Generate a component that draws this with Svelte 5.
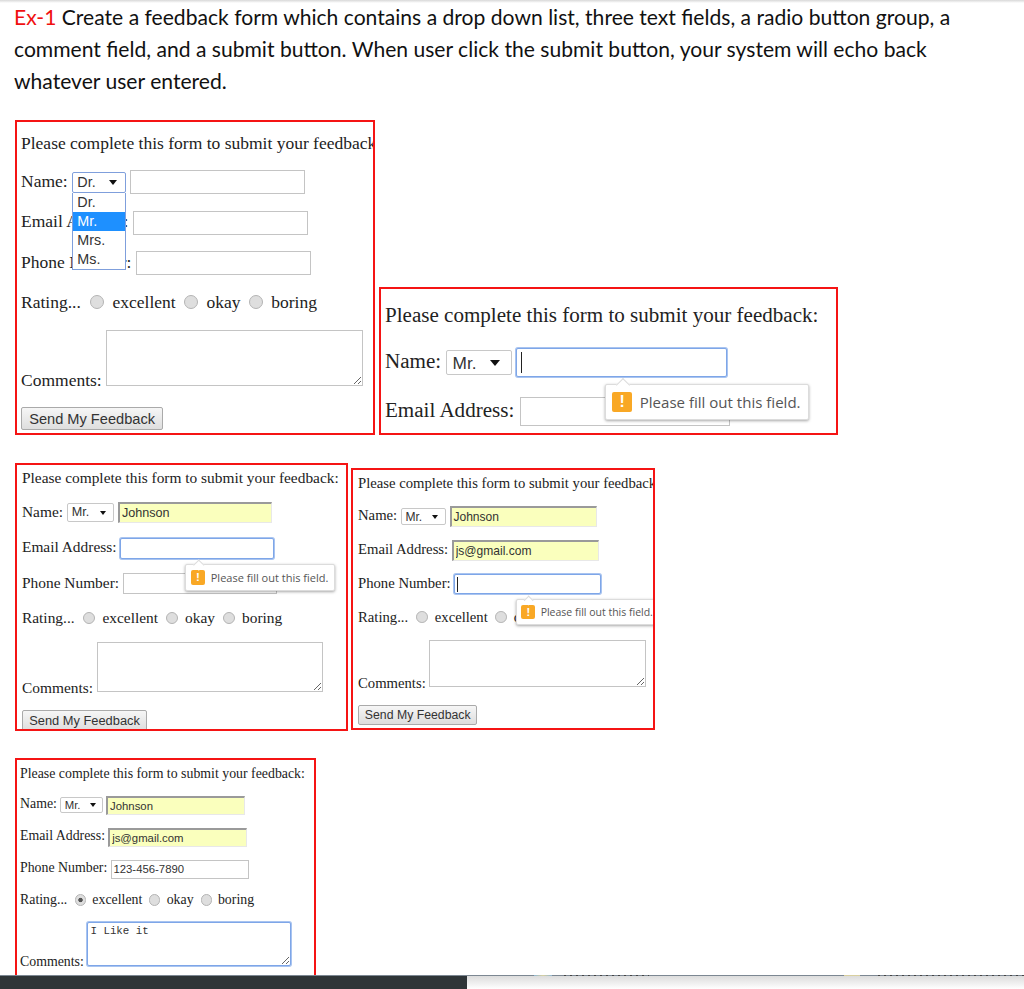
<script>
  const titles = ['Dr.', 'Mr.', 'Mrs.', 'Ms.'];

  const A = { title: 'Dr.', open: true };
  const B = { title: 'Mr.', focus: 'name', tip: 'name', only: 2 };
  const C = { title: 'Mr.', name: 'Johnson', focus: 'email', tip: 'email', filled: ['name'] };
  const D = { title: 'Mr.', name: 'Johnson', email: 'js@gmail.com', focus: 'phone', tip: 'phone', filled: ['name', 'email'] };
  const E = { title: 'Mr.', name: 'Johnson', email: 'js@gmail.com', phone: '123-456-7890', rating: 'excellent', comment: 'I Like it', filled: ['name', 'email'] };

  const fields = [
    { id: 'name', label: 'Name:' },
    { id: 'email', label: 'Email Address:' },
    { id: 'phone', label: 'Phone Number:' }
  ];
  const ratings = ['excellent', 'okay', 'boring'];
</script>

{#snippet feedback(f)}
  <p class="intro">Please complete this form to submit your feedback:</p>

  {#each fields.slice(0, f.only ?? 3) as field}
    <div class="field">
      <label for={field.id}>{field.label}</label>
      {#if field.id === 'name'}
        <span class="pick" class:open={f.open}>
          <select>
            {#each titles as t}
              <option selected={t === f.title}>{t}</option>
            {/each}
          </select>
          {#if f.open}
            <ul class="options">
              {#each titles as t}
                <li class:hl={t === 'Mr.'}>{t}</li>
              {/each}
            </ul>
          {/if}
        </span>
      {/if}
      <span class="wrap">
        <input
          type="text"
          value={f[field.id] ?? ''}
          class:filled={f.filled?.includes(field.id)}
          class:focus={f.focus === field.id}
        />
        {#if f.tip === field.id}
          {#if field.id !== 'email'}<i class="caret"></i>{/if}
          <div class="tip">
            <b class="warn">!</b>
            <span>Please fill out this field.</span>
          </div>
        {/if}
      </span>
    </div>
  {/each}

  {#if !f.only}
    <div class="field rating">
      <span class="lead">Rating...</span>
      {#each ratings as r}
        <input type="radio" checked={f.rating === r} />
        <span class="opt">{r}</span>
      {/each}
    </div>
    <div class="field comments">
      <label for="comments">Comments:</label>
      <textarea class:focus={f.comment} value={f.comment ?? ''}></textarea>
    </div>
    <button type="button">Send My Feedback</button>
  {/if}
{/snippet}

<div class="page">
  <p class="task">
    <span class="ex">Ex-1</span> Create a feedback form which contains a drop down list, three text fields, a radio button group, a comment field, and a submit button. When user click the submit button, your system will echo back whatever user entered.
  </p>

  <div class="row first">
    <section class="panel a">{@render feedback(A)}</section>
    <section class="panel b">{@render feedback(B)}</section>
  </div>

  <div class="row second">
    <section class="panel c">{@render feedback(C)}</section>
    <section class="panel d">{@render feedback(D)}</section>
  </div>

  <div class="row third">
    <section class="panel e">{@render feedback(E)}</section>
  </div>

  <footer>
    <div class="dark"></div>
    <div class="light">
      <i class="mark tint one"></i>
      <i class="mark dash two"></i>
      <i class="mark tan three"></i>
      <i class="mark dash four"></i>
    </div>
  </footer>
</div>

<style>
  :global(body) {
    margin: 0;
    background: #fff;
  }

  .page {
    position: relative;
    width: 1024px;
    height: 989px;
    overflow: hidden;
    background: linear-gradient(#d8d8d8, #fff 3px);
  }

  .task {
    margin: 0;
    padding: 1px 50px 0 14px;
    height: 120px;
    box-sizing: border-box;
    font-family: Lato, "Open Sans", sans-serif;
    font-size: 21.1px;
    line-height: 32px;
    color: #111;
  }

  .ex {
    color: #f01010;
  }

  .row {
    display: flex;
    align-items: flex-start;
    margin-left: 15px;
  }

  .first {
    gap: 4px;
    align-items: flex-end;
    height: 315px;
  }

  .second {
    gap: 3px;
    margin-top: 28px;
    height: 295px;
  }

  .panel {
    position: relative;
    box-sizing: border-box;
    flex: none;
    border: 2px solid #f51414;
    overflow: hidden;
    font-family: "Liberation Serif", serif;
    color: #222;
  }

  .a { width: 360px; height: 315px; font-size: 17.5px; padding-left: 4px; }
  .b { width: 459px; height: 148px; font-size: 21.07px; padding-left: 4px; }
  .c { width: 333px; height: 268px; font-size: 15.4px; padding-left: 5px; }
  .d { width: 304px; height: 262px; font-size: 14.7px; padding-left: 5px; margin-top: 5px; }
  .e { width: 301px; height: 217px; font-size: 13.85px; padding-left: 3px; border-bottom: 0; }

  .intro {
    margin: 0;
    white-space: nowrap;
    line-height: 1.2em;
  }

  .a .intro { margin-top: 11px; }
  .b .intro { margin-top: 14px; }
  .c .intro { margin-top: 4px; }
  .d .intro { margin-top: 5px; }
  .e .intro { margin-top: 6px; }

  .field {
    display: flex;
    align-items: center;
    height: 1.37em;
    margin-top: 0.94em;
    white-space: nowrap;
  }

  label {
    margin-right: 0.25em;
  }

  .lead {
    margin-right: 0.2em;
  }

  .field > label {
    margin-bottom: 0.1em;
  }

  .pick {
    position: relative;
    display: inline-block;
    margin-right: 0.23em;
  }

  .pick::after {
    content: "";
    position: absolute;
    right: 0.55em;
    top: 0.48em;
    border: 0.24em solid transparent;
    border-top: 0.32em solid #111;
    border-bottom: 0;
  }

  select {
    display: block;
    appearance: none;
    box-sizing: border-box;
    width: 3.77em;
    height: 1.46em;
    padding: 0 0 0 0.3em;
    border: 1px solid #c8c8c8;
    border-radius: 2px;
    background: #fff;
    font-family: "Liberation Sans", sans-serif;
    font-size: 0.82em;
    color: #333;
  }

  .open select {
    border-color: #7f9fdc;
  }

  .options {
    position: absolute;
    z-index: 3;
    left: 0;
    top: 100%;
    box-sizing: border-box;
    width: 100%;
    margin: 0;
    padding: 0;
    list-style: none;
    background: #fff;
    border: 1px solid #7f9fdc;
    border-top: 0;
    font-family: "Liberation Sans", sans-serif;
    font-size: 0.82em;
    line-height: 1.32em;
    color: #333;
  }

  .options li {
    padding-left: 0.3em;
  }

  .options .hl {
    background: #1e90ff;
    color: #fff;
  }

  .wrap {
    position: relative;
    display: inline-block;
  }

  input[type="text"] {
    display: block;
    box-sizing: border-box;
    width: 12.2em;
    height: 1.67em;
    padding: 0 0.15em;
    border: 1px solid #c4c4c4;
    background: #fff;
    font-family: "Liberation Sans", sans-serif;
    font-size: 0.82em;
    outline: none;
    color: #333;
  }

  input.filled {
    background: #faffbd;
    border-color: #9a9a9a #e8e8e8 #e8e8e8 #9a9a9a;
    border-width: 2px 1px 1px 2px;
  }

  input.focus,
  textarea.focus {
    border: 1px solid #7ea6e8;
    border-radius: 2px;
    box-shadow: 0 0 0 1px #a9c4f0;
  }

  .caret {
    position: absolute;
    left: 0.2em;
    top: 0.2em;
    bottom: 0.2em;
    width: 1px;
    background: #222;
  }

  .tip {
    position: absolute;
    z-index: 2;
    left: 5.87em;
    top: calc(100% + 0.47em);
    display: flex;
    align-items: center;
    gap: 0.5em;
    padding: 0.45em 0.47em 0.45em 0.42em;
    background: #fff;
    border: 1px solid #dcdcdc;
    border-radius: 2px;
    box-shadow: 0 1px 3px rgba(0, 0, 0, 0.35);
    font-family: "Open Sans", sans-serif;
    font-size: 0.715em;
    color: #555;
    white-space: nowrap;
  }

  .tip::before {
    content: "";
    position: absolute;
    left: 0.8em;
    top: -0.34em;
    width: 0.6em;
    height: 0.6em;
    background: #fff;
    border: solid #dcdcdc;
    border-width: 1px 0 0 1px;
    transform: rotate(45deg);
  }

  .warn {
    display: inline-flex;
    align-items: center;
    justify-content: center;
    width: 1.27em;
    height: 1.27em;
    border-radius: 2px;
    background: #f9a825;
    color: #fff;
    font-family: "Liberation Sans", sans-serif;
    font-size: 1.05em;
    font-weight: bold;
  }

  .rating {
    margin-top: 0.86em;
  }

  input[type="radio"] {
    appearance: none;
    box-sizing: border-box;
    flex: none;
    width: 0.8em;
    height: 0.8em;
    margin: 0 0.46em 0 0.35em;
    border: 1px solid #b4b4b4;
    border-radius: 50%;
    background: #dedede;
    font-size: inherit;
  }

  input[type="radio"]:checked {
    background: radial-gradient(circle, #555 0 28%, #dedede 38%);
  }

  .opt {
    margin-right: 0.15em;
  }

  .comments {
    align-items: flex-end;
    height: auto;
    margin-top: 0.9em;
  }

  .field.comments > label {
    line-height: 1;
    margin-bottom: -0.22em;
  }

  textarea {
    display: block;
    box-sizing: border-box;
    width: 18.85em;
    height: 4.1em;
    padding: 0.2em 0.2em;
    border: 1px solid #c4c4c4;
    font-family: "Liberation Mono", monospace;
    font-size: 0.78em;
    outline: none;
    color: #333;
  }

  button {
    display: block;
    box-sizing: border-box;
    width: 9.73em;
    height: 1.58em;
    margin-top: 1.45em;
    padding: 0;
    border: 1px solid #aaa;
    border-radius: 2px;
    background: linear-gradient(#f6f6f6, #dedede);
    font-family: "Liberation Sans", sans-serif;
    font-size: 0.835em;
    color: #333;
  }

  footer {
    position: absolute;
    left: 0;
    right: 0;
    top: 975px;
    bottom: 0;
    display: flex;
    border-top: 1px solid #7c8792;
  }

  .dark {
    width: 467px;
    background: #2f3538;
  }

  .light {
    position: relative;
    flex: 1;
    background: linear-gradient(#dcdcdc, #fff);
  }

  .mark {
    position: absolute;
    top: -1px;
    height: 1px;
  }

  .dash {
    background: repeating-linear-gradient(90deg, #444 0 2px, transparent 2px 6px);
  }

  .tint {
    background: linear-gradient(90deg, #8fb6d2, #d8cfa0, #8fb6d2);
  }

  .tan {
    background: #d8cfa0;
  }

  .one { left: 67px; width: 18px; }
  .two { left: 97px; width: 85px; }
  .three { left: 377px; width: 16px; }
  .four { left: 411px; width: 146px; }
</style>
